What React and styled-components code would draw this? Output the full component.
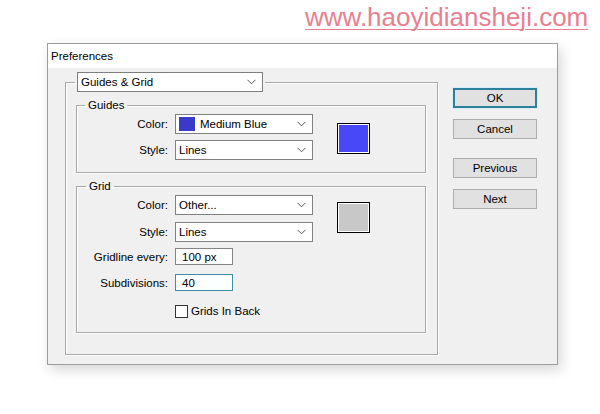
import React from 'react';
import styled, { createGlobalStyle } from 'styled-components';

const Global = createGlobalStyle`
  html, body {
    margin: 0;
    padding: 0;
    background: #ffffff;
  }
  body {
    font-family: "Liberation Sans", Arial, sans-serif;
    font-size: 11.5px;
    color: #000;
  }
`;

const Page = styled.div`
  width: 600px;
  height: 414px;
  overflow: hidden;
  padding-top: 2px;
  box-sizing: border-box;
`;

const Watermark = styled.div`
  margin-left: 305px;
  height: 32px;
  font-size: 26px;
  line-height: 30px;
  color: #e8808f;
  text-decoration: underline;
  text-decoration-thickness: 1px;
  text-underline-offset: 3px;
  white-space: nowrap;
`;

const Dialog = styled.div`
  margin: 9px 0 0 47px;
  width: 511px;
  height: 322px;
  box-sizing: border-box;
  border: 1px solid #9c9c9c;
  background: #f0f0f0;
  box-shadow: 3px 5px 12px rgba(0, 0, 0, 0.16);
  display: flex;
  flex-direction: column;
`;

const TitleBar = styled.div`
  height: 24px;
  background: #ffffff;
  display: flex;
  align-items: center;
  padding-left: 3px;
  font-size: 11.5px;
`;

const Body = styled.div`
  flex: 1;
  display: flex;
  padding: 4px 19px 0 17px;
`;

const Group = styled.fieldset`
  margin: 0;
  margin-top: ${p => p.$mt ?? 0}px;
  padding: ${p => p.$pad};
  border: 1px solid #a8a8a8;
  box-shadow: inset 1px 1px 0 #ffffff, 1px 1px 0 #ffffff;
  min-width: 0;
  box-sizing: border-box;
  width: ${p => p.$w}px;
  height: ${p => (p.$h ? `${p.$h}px` : 'auto')};
`;

const Legend = styled.legend`
  padding: 0 ${p => p.$px ?? 3}px;
  margin-left: ${p => p.$ml ?? 0}px;
  line-height: 14px;
`;

const Select = styled.div`
  width: ${p => p.$w}px;
  height: 20px;
  box-sizing: border-box;
  border: 1px solid #7f7f7f;
  background: #ffffff;
  display: flex;
  align-items: center;
  padding-left: 3px;
  gap: 5px;
`;

const SelectText = styled.span`
  flex: 1;
  white-space: nowrap;
`;

const Arrow = styled.svg`
  width: 9px;
  height: 6px;
  margin-right: 6px;
  flex: none;
`;

const Chip = styled.span`
  width: 16px;
  height: 14px;
  background: #3a3ac8;
  flex: none;
`;

const Stack = styled.div`
  display: flex;
  flex-direction: column;
`;

const Columns = styled.div`
  display: flex;
  align-items: flex-start;
`;

const Row = styled.div`
  display: flex;
  align-items: center;
  height: ${p => p.$h}px;
  margin-top: ${p => p.$mt ?? 0}px;
`;

const Label = styled.label`
  width: 91px;
  text-align: right;
  margin-right: 7px;
  white-space: nowrap;
`;

const Field = styled.div`
  width: 58px;
  height: 17px;
  box-sizing: border-box;
  border: 1px solid ${p => (p.$focus ? '#3f8ea6' : '#858585')};
  background: ${p => (p.$focus ? '#fbffff' : '#ffffff')};
  display: flex;
  align-items: center;
  padding-left: 6px;
`;

const Check = styled.span`
  width: 13px;
  height: 13px;
  box-sizing: border-box;
  border: 1px solid #333;
  background: #fff;
  margin-left: 98px;
  margin-right: 3px;
`;

const Swatch = styled.div`
  width: 33px;
  height: 31px;
  box-sizing: border-box;
  border: 1px solid #000;
  box-shadow: inset 0 0 0 1px #ffffff;
  background: ${p => p.$color};
  margin: ${p => p.$top}px 0 0 24px;
`;

const Buttons = styled.div`
  display: flex;
  flex-direction: column;
  padding-top: 16px;
  margin-left: 15px;
`;

const Button = styled.button`
  width: 84px;
  height: 20px;
  margin-top: ${p => p.$mt ?? 0}px;
  box-sizing: border-box;
  border: ${p => (p.$primary ? '2px solid #2f7f9c' : '1px solid #adadad')};
  background: #e1e1e1;
  box-shadow: ${p => (p.$primary ? '0 0 0 1px #d6eef8' : 'none')};
  font-family: inherit;
  font-size: 11.5px;
  color: #000;
  padding: 0;
`;

function Chevron() {
  return (
    <Arrow viewBox="0 0 9 6">
      <path d="M0.5 0.8 L4.5 4.8 L8.5 0.8" fill="none" stroke="#555" strokeWidth="1" />
    </Arrow>
  );
}

function App() {
  return (
    <Page>
      <Global />
      <Watermark>www.haoyidiansheji.com</Watermark>
      <Dialog>
        <TitleBar>Preferences</TitleBar>
        <Body>
          <Group $w={373} $h={283} $pad="6px 11px 0 10px">
            <Legend $px={2} $ml={-1}>
              <Select $w={186}>
                <SelectText>Guides &amp; Grid</SelectText>
                <Chevron />
              </Select>
            </Legend>

            <Group $w={350} $pad="2px 0 12px 0">
              <Legend $ml={8}>Guides</Legend>
              <Columns>
                <Stack>
                  <Row $h={20}>
                    <Label>Color:</Label>
                    <Select $w={138}>
                      <Chip />
                      <SelectText>Medium Blue</SelectText>
                      <Chevron />
                    </Select>
                  </Row>
                  <Row $h={20} $mt={6}>
                    <Label>Style:</Label>
                    <Select $w={138}>
                      <SelectText>Lines</SelectText>
                      <Chevron />
                    </Select>
                  </Row>
                </Stack>
                <Swatch $color="#4848f8" $top={9} />
              </Columns>
            </Group>

            <Group $w={350} $mt={6} $pad="2px 0 13px 0">
              <Legend $ml={9}>Grid</Legend>
              <Columns>
                <Stack>
                  <Row $h={20}>
                    <Label>Color:</Label>
                    <Select $w={138}>
                      <SelectText>Other...</SelectText>
                      <Chevron />
                    </Select>
                  </Row>
                  <Row $h={20} $mt={7}>
                    <Label>Style:</Label>
                    <Select $w={138}>
                      <SelectText>Lines</SelectText>
                      <Chevron />
                    </Select>
                  </Row>
                  <Row $h={17} $mt={6}>
                    <Label>Gridline every:</Label>
                    <Field>100 px</Field>
                  </Row>
                  <Row $h={17} $mt={9}>
                    <Label>Subdivisions:</Label>
                    <Field $focus>40</Field>
                  </Row>
                  <Row $h={16} $mt={12}>
                    <Check />
                    Grids In Back
                  </Row>
                </Stack>
                <Swatch $color="#c8c8c8" $top={7} />
              </Columns>
            </Group>
          </Group>

          <Buttons>
            <Button $primary>OK</Button>
            <Button $mt={11}>Cancel</Button>
            <Button $mt={19}>Previous</Button>
            <Button $mt={11}>Next</Button>
          </Buttons>
        </Body>
      </Dialog>
    </Page>
  );
}

export default App;
